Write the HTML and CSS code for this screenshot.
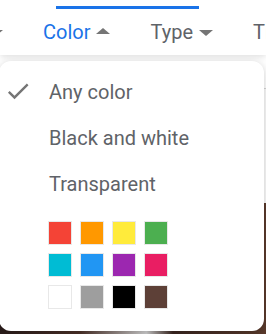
FILE: index.html
```html
<!DOCTYPE html>
<html lang="en">
<head>
    <meta charset="UTF-8">
    <meta name="viewport" content="width=device-width, initial-scale=1.0">
    <title>Color filter</title>
    <link rel="stylesheet" href="styles.css">
</head>
<body>
    <!-- Filter tabs -->
    <div class="toolbar">
        <div class="indicator"></div>
        <div class="tabs">
            <span class="arrow down"></span>
            <div class="tab active">
                <span>Color</span>
                <span class="arrow up"></span>
            </div>
            <div class="tab">
                <span>Type</span>
                <span class="arrow down"></span>
            </div>
            <div class="tab">
                <span>Time</span>
            </div>
        </div>
    </div>

    <!-- Page behind the menu -->
    <div class="page">
        <div class="rule"></div>
        <div class="photo"></div>
    </div>

    <!-- Color menu -->
    <div class="menu">
        <div class="option">
            <span class="lead">
                <svg class="check" viewBox="0 0 24 24" width="28" height="28">
                    <path d="M9 16.17L4.83 12l-1.42 1.41L9 19 21 7l-1.41-1.41z" fill="#757575"/>
                </svg>
            </span>
            <span>Any color</span>
        </div>
        <div class="option">
            <span class="lead"></span>
            <span>Black and white</span>
        </div>
        <div class="option">
            <span class="lead"></span>
            <span>Transparent</span>
        </div>

        <div class="swatches">
            <span class="swatch red"></span>
            <span class="swatch orange"></span>
            <span class="swatch yellow"></span>
            <span class="swatch green"></span>
            <span class="swatch teal"></span>
            <span class="swatch blue"></span>
            <span class="swatch purple"></span>
            <span class="swatch pink"></span>
            <span class="swatch white"></span>
            <span class="swatch gray"></span>
            <span class="swatch black"></span>
            <span class="swatch brown"></span>
        </div>
    </div>
</body>
</html>
```

FILE: styles.css
```css
html {
    overflow: hidden;
}

body {
    margin: 0;
    width: 266px;
    height: 334px;
    overflow: hidden;
    position: relative;
    font-family: Roboto, "Liberation Sans", Arial, sans-serif;
    background-color: #fff;
}

/* Toolbar */
.toolbar {
    height: 55px;
    background-color: #fff;
    box-shadow: 0 2px 6px rgba(0, 0, 0, 0.12);
    position: relative;
    z-index: 1;
    overflow: hidden;
}

.indicator {
    margin-left: 56px;
    width: 143px;
    height: 3px;
    padding-top: 6px;
    background-clip: content-box;
    background-color: #1a73e8;
}

.tabs {
    display: flex;
    align-items: center;
    gap: 40px;
    margin-left: -11px;
    margin-top: 11px;
    white-space: nowrap;
    font-size: 20px;
    line-height: 24px;
    color: #5f6368;
}

.tab {
    display: flex;
    align-items: center;
    gap: 6px;
}

.tab.active {
    color: #1a73e8;
}

.arrow {
    width: 0;
    height: 0;
    border-left: 7px solid transparent;
    border-right: 7px solid transparent;
}

.arrow.down {
    border-top: 6px solid #757575;
    margin-top: 2px;
}

.arrow.up {
    border-bottom: 6px solid #757575;
    margin-top: -2px;
}

/* Background page */
.page {
    height: 279px;
    background-color: #fafafa;
}

.rule {
    margin-top: 33px;
    height: 1px;
    background-color: #d6d6d6;
}

.photo {
    margin-top: 114px;
    height: 131px;
    background: linear-gradient(90deg, #2a1c1a 0%, #4a3028 30%, #cfcfcf 55%, #3a2620 65%, #5a3a2c 100%);
}

/* Menu */
.menu {
    position: absolute;
    top: 61px;
    left: -1px;
    width: 265px;
    box-sizing: border-box;
    padding: 8px 0 22px;
    background-color: #fff;
    border-radius: 12px;
    box-shadow: 0 2px 8px rgba(0, 0, 0, 0.2);
    z-index: 2;
}

.option {
    display: flex;
    align-items: center;
    height: 46px;
    font-size: 20px;
    color: #5f6368;
}

.lead {
    width: 50px;
    height: 46px;
    flex-shrink: 0;
    display: flex;
    align-items: center;
}

.check {
    margin-left: 5px;
    margin-top: -3px;
}

.swatches {
    display: grid;
    grid-template-columns: repeat(4, 24px);
    gap: 8px;
    margin: 14px 0 0 49px;
}

.swatch {
    width: 24px;
    height: 24px;
    box-sizing: border-box;
    border: 1px solid #e8e8e8;
}

.red { background-color: #f44336; }
.orange { background-color: #ff9800; }
.yellow { background-color: #ffeb3b; }
.green { background-color: #4caf50; }
.teal { background-color: #00bcd4; }
.blue { background-color: #2196f3; }
.purple { background-color: #9c27b0; }
.pink { background-color: #e91e63; }
.white { background-color: #fff; }
.gray { background-color: #9e9e9e; }
.black { background-color: #000; }
.brown { background-color: #5d4037; }
```
